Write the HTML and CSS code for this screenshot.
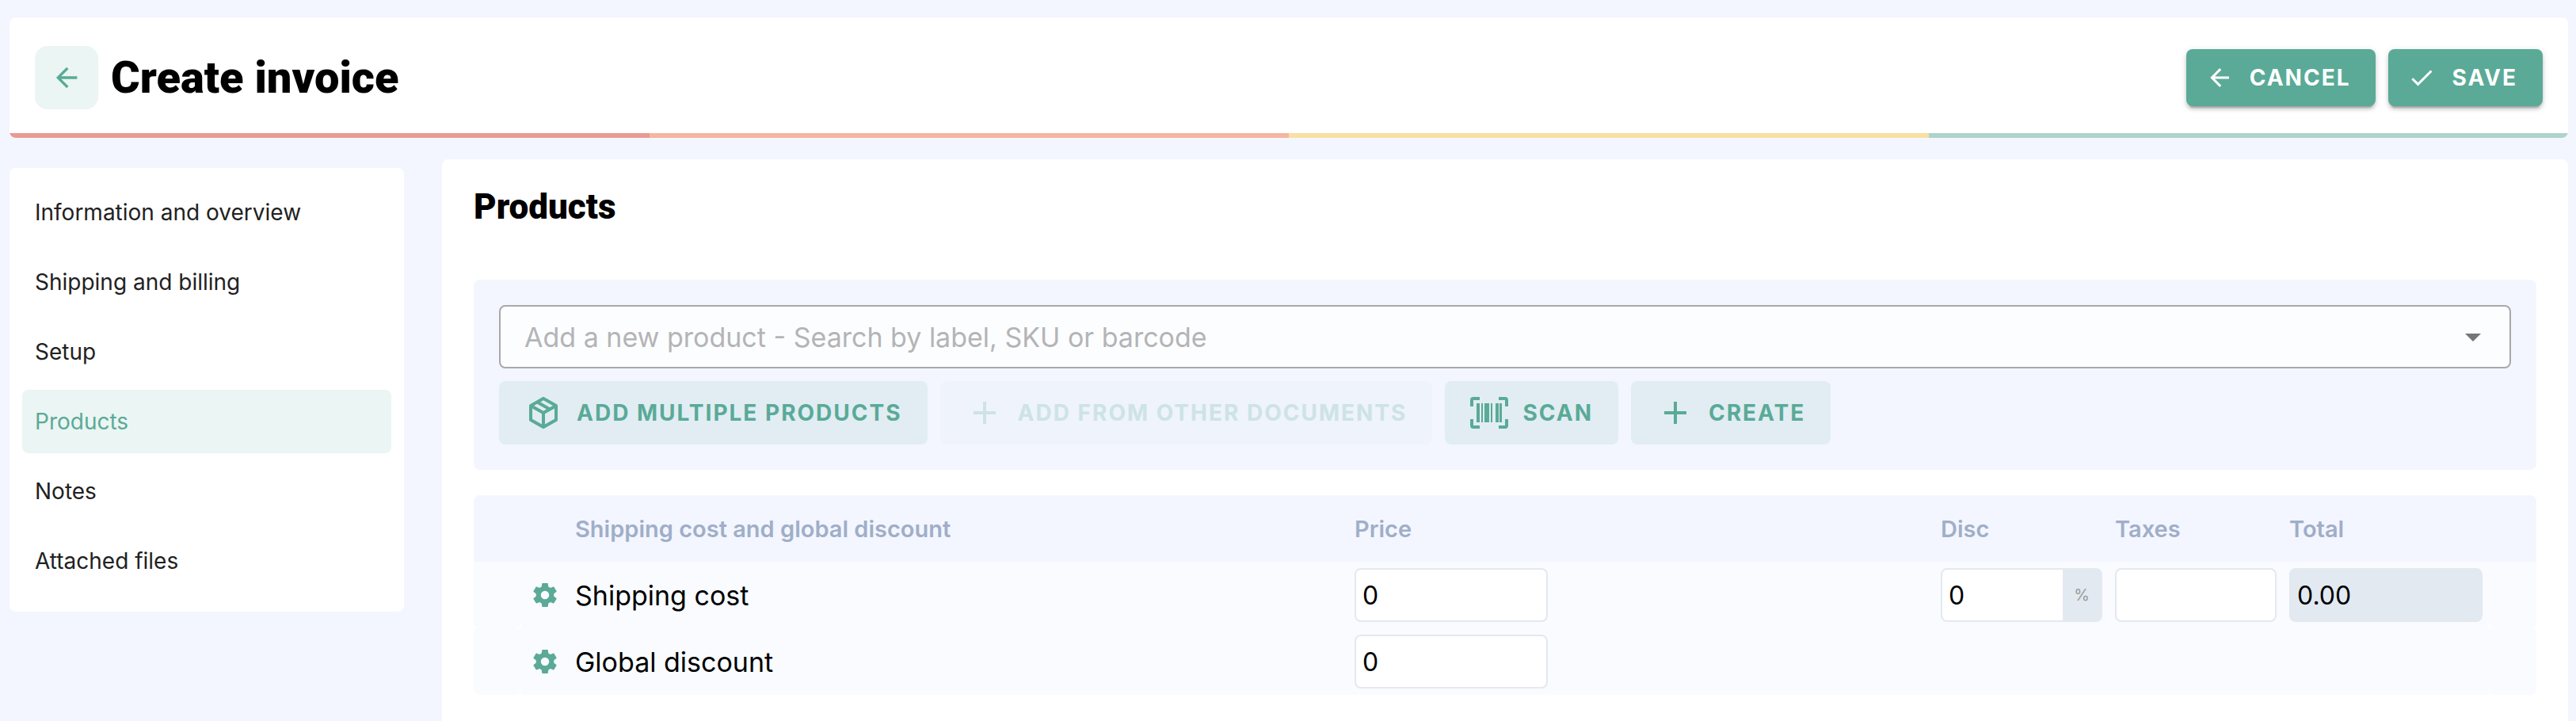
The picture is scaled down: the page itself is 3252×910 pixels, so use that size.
FILE: index.html
```html
<!DOCTYPE html>
<html lang="en">
<head>
    <meta charset="UTF-8">
    <meta name="viewport" content="width=device-width, initial-scale=1.0">
    <title>Create invoice</title>
    <link rel="stylesheet" href="styles.css">
</head>
<body>
    <header class="page-header">
        <div class="header-row">
            <button class="back-button" type="button" aria-label="Back">
                <svg width="40" height="40" viewBox="0 0 24 24"><path d="M20 11v2H8l5.500 5.500-1.420 1.420L4.160 12l7.920-7.920L13.500 5.500 8 11z"/></svg>
            </button>
            <h1>Create invoice</h1>
            <div class="header-actions">
                <button class="btn btn-primary" type="button">
                    <svg width="36" height="36" viewBox="0 0 24 24"><path d="M20 11v2H8l5.500 5.500-1.420 1.420L4.160 12l7.920-7.920L13.500 5.500 8 11z"/></svg>
                    CANCEL
                </button>
                <button class="btn btn-primary" type="button">
                    <svg width="36" height="36" viewBox="0 0 24 24"><path d="M21 7 9 19l-5.500-5.500 1.410-1.410L9 16.170 19.590 5.590z"/></svg>
                    SAVE
                </button>
            </div>
        </div>
        <div class="stripe">
            <span class="stripe-red"></span>
            <span class="stripe-orange"></span>
            <span class="stripe-yellow"></span>
            <span class="stripe-green"></span>
        </div>
    </header>

    <div class="content">
        <nav class="sidebar">
            <a href="#information">Information and overview</a>
            <a href="#shipping">Shipping and billing</a>
            <a href="#setup">Setup</a>
            <a href="#products" class="active">Products</a>
            <a href="#notes">Notes</a>
            <a href="#files">Attached files</a>
        </nav>

        <main class="card" id="products">
            <h2>Products</h2>

            <section class="add-panel">
                <div class="search">
                    <input type="text" aria-label="Add a new product" placeholder="Add a new product - Search by label, SKU or barcode">
                    <svg width="48" height="48" viewBox="0 0 24 24"><path d="M7 10l5 5 5-5z"/></svg>
                </div>
                <div class="add-actions">
                    <button class="btn btn-light" type="button">
                        <svg width="48" height="48" viewBox="0 0 24 24"><path d="M21 16.500c0 .38-.21.71-.53.88l-7.900 4.440c-.16.12-.36.18-.57.18s-.41-.06-.57-.18l-7.900-4.440A.99.990 0 0 1 3 16.500v-9c0-.38.21-.71.53-.88l7.900-4.440c.16-.12.36-.18.57-.18s.41.060.57.18l7.900 4.440c.32.17.53.5.53.88zM12 4.150l-1.890 1.070L16 8.610l1.960-1.110zM6.040 7.500 12 10.850l1.960-1.100-5.880-3.400zM5 15.910l6 3.380v-6.710L5 9.210zm14 0v-6.700l-6 3.370v6.710z"/></svg>
                        ADD MULTIPLE PRODUCTS
                    </button>
                    <button class="btn btn-light" type="button" disabled>
                        <svg width="48" height="48" viewBox="0 0 24 24"><path d="M19 13h-6v6h-2v-6H5v-2h6V5h2v6h6z"/></svg>
                        ADD FROM OTHER DOCUMENTS
                    </button>
                    <button class="btn btn-light" type="button">
                        <svg width="48" height="40" viewBox="0 0 48 40"><path d="M0 12V4a4 4 0 0 1 4-4h8v4H4v8zM36 0h8a4 4 0 0 1 4 4v8h-4V4h-8zM0 28v8a4 4 0 0 0 4 4h8v-4H4v-8zM44 28v8h-8v4h8a4 4 0 0 0 4-4v-8zM8 8h4v24H8zM14 8h2v24h-2zM18 8h6v24h-6zM26 8h2v24h-2zM32 8h4v24h-4zM37 8h3v24h-3z"/></svg>
                        SCAN
                    </button>
                    <button class="btn btn-light" type="button">
                        <svg width="48" height="48" viewBox="0 0 24 24"><path d="M19 13h-6v6h-2v-6H5v-2h6V5h2v6h6z"/></svg>
                        CREATE
                    </button>
                </div>
            </section>

            <table class="costs">
                <thead>
                    <tr>
                        <th class="col-edge"></th>
                        <th class="col-edge"></th>
                        <th>Shipping cost and global discount</th>
                        <th class="col-price">Price</th>
                        <th class="col-small">Disc</th>
                        <th class="col-small">Taxes</th>
                        <th class="col-total">Total</th>
                        <th class="col-edge"></th>
                    </tr>
                </thead>
                <tbody>
                    <tr>
                        <td></td>
                        <td>
                            <button class="gear" type="button" aria-label="Shipping cost settings">
                                <svg width="36" height="36" viewBox="0 0 24 24"><path d="M12 15.500A3.500 3.500 0 0 1 8.500 12 3.500 3.500 0 0 1 12 8.500a3.500 3.500 0 0 1 3.500 3.500 3.500 3.500 0 0 1-3.500 3.500m7.430-2.530c.04-.32.07-.64.07-.97s-.03-.66-.07-1l2.110-1.630c.19-.15.24-.42.12-.64l-2-3.460c-.12-.22-.39-.31-.61-.22l-2.490 1c-.52-.39-1.060-.73-1.690-.98l-.37-2.650A.506.506 0 0 0 14 2h-4c-.25 0-.46.18-.5.42l-.37 2.650c-.63.25-1.170.59-1.690.98l-2.490-1c-.22-.09-.49 0-.61.22l-2 3.460c-.13.22-.07.49.12.64L4.570 11c-.04.34-.07.67-.07 1s.03.65.07.97l-2.110 1.660c-.19.15-.25.42-.12.64l2 3.460c.12.22.39.3.61.22l2.490-1.010c.52.4 1.060.74 1.690.99l.37 2.650c.04.24.25.42.5.42h4c.25 0 .46-.18.5-.42l.37-2.650c.63-.26 1.170-.59 1.690-.99l2.490 1.010c.22.08.49 0 .61-.22l2-3.460c.12-.22.07-.49-.12-.64z"/></svg>
                            </button>
                        </td>
                        <td><label for="shipping-price">Shipping cost</label></td>
                        <td><input class="field" id="shipping-price" type="text" value="0"></td>
                        <td>
                            <div class="percent">
                                <input type="text" aria-label="Discount" value="0">
                                <span>%</span>
                            </div>
                        </td>
                        <td><input class="field" type="text" aria-label="Taxes"></td>
                        <td><input class="field" type="text" aria-label="Total" value="0.00" readonly></td>
                        <td></td>
                    </tr>
                    <tr>
                        <td></td>
                        <td>
                            <button class="gear" type="button" aria-label="Global discount settings">
                                <svg width="36" height="36" viewBox="0 0 24 24"><path d="M12 15.500A3.500 3.500 0 0 1 8.500 12 3.500 3.500 0 0 1 12 8.500a3.500 3.500 0 0 1 3.500 3.500 3.500 3.500 0 0 1-3.500 3.500m7.430-2.530c.04-.32.07-.64.07-.97s-.03-.66-.07-1l2.110-1.630c.19-.15.24-.42.12-.64l-2-3.460c-.12-.22-.39-.31-.61-.22l-2.490 1c-.52-.39-1.060-.73-1.690-.98l-.37-2.650A.506.506 0 0 0 14 2h-4c-.25 0-.46.18-.5.42l-.37 2.650c-.63.25-1.170.59-1.690.98l-2.490-1c-.22-.09-.49 0-.61.22l-2 3.460c-.13.22-.07.49.12.64L4.570 11c-.04.34-.07.67-.07 1s.03.65.07.97l-2.110 1.660c-.19.15-.25.42-.12.64l2 3.460c.12.22.39.3.61.22l2.490-1.010c.52.4 1.060.74 1.690.99l.37 2.650c.04.24.25.42.5.42h4c.25 0 .46-.18.5-.42l.37-2.650c.63-.26 1.170-.59 1.690-.99l2.490 1.010c.22.08.49 0 .61-.22l2-3.460c.12-.22.07-.49-.12-.64z"/></svg>
                            </button>
                        </td>
                        <td><label for="discount-price">Global discount</label></td>
                        <td><input class="field" id="discount-price" type="text" value="0"></td>
                        <td></td>
                        <td></td>
                        <td></td>
                        <td></td>
                    </tr>
                </tbody>
            </table>
        </main>
    </div>
</body>
</html>
```
FILE: styles.css
```css
* {
    box-sizing: border-box;
}

body {
    margin: 0;
    padding: 22px 10px 0 12px;
    min-height: 100vh;
    display: flex;
    flex-direction: column;
    background-color: #f3f6ff;
    color: #000;
    font-family: Inter, 'Open Sans', sans-serif;
    font-size: 34px;
}

button, input {
    font-family: inherit;
}

svg {
    display: block;
    fill: currentColor;
    flex-shrink: 0;
}

h1, h2 {
    margin: 0;
    font-family: Roboto, sans-serif;
    font-weight: 900;
}

/* header */
.page-header {
    background-color: #fff;
    border-radius: 8px;
    overflow: hidden;
}

.header-row {
    display: flex;
    align-items: center;
    height: 146px;
    padding: 6px 32px 0;
}

.back-button {
    display: flex;
    align-items: center;
    justify-content: center;
    width: 80px;
    height: 80px;
    padding: 0;
    border: none;
    border-radius: 16px;
    background-color: #ebf5f3;
    color: #5aaa97;
    cursor: pointer;
}

h1 {
    margin-left: 16px;
    font-size: 56px;
    line-height: 64px;
}

.header-actions {
    display: flex;
    gap: 16px;
    margin-left: auto;
}

.stripe {
    display: flex;
    height: 6px;
}

.stripe span {
    flex: 1;
}

.stripe-red {
    background-color: #e99a92;
}

.stripe-orange {
    background-color: #f5b5a0;
}

.stripe-yellow {
    background-color: #f9dfa4;
}

.stripe-green {
    background-color: #acd4cb;
}

/* buttons */
.btn {
    display: flex;
    align-items: center;
    border: none;
    border-radius: 8px;
    font-size: 28px;
    font-weight: 700;
    letter-spacing: 2px;
    white-space: nowrap;
    cursor: pointer;
}

.btn-primary {
    gap: 20px;
    height: 72px;
    padding: 0 32px 0 24px;
    background-color: #5aaa97;
    color: #fff;
    box-shadow: 0 6px 2px -4px rgba(0, 0, 0, 0.2), 0 4px 4px rgba(0, 0, 0, 0.14), 0 2px 10px rgba(0, 0, 0, 0.12);
}

.btn-light {
    gap: 18px;
    height: 80px;
    padding: 0 32px;
    background-color: #e1edf3;
    color: #5aaa97;
}

.btn-light:disabled {
    background-color: #eef3fc;
    color: #cde3e5;
    cursor: default;
}

/* layout */
.content {
    display: flex;
    flex: 1;
    align-items: flex-start;
    gap: 48px;
    margin-top: 27px;
}

.sidebar {
    width: 498px;
    flex-shrink: 0;
    margin-top: 11px;
    padding: 16px;
    background-color: #fff;
    border-radius: 8px;
}

.sidebar a {
    display: block;
    margin-bottom: 8px;
    padding: 0 16px;
    border-radius: 8px;
    color: #212121;
    font-size: 28px;
    line-height: 80px;
    text-decoration: none;
}

.sidebar a.active {
    background-color: #ebf5f3;
    color: #5aaa97;
}

.card {
    flex: 1;
    align-self: stretch;
    padding: 32px 40px;
    background-color: #fff;
    border-radius: 8px 8px 0 0;
}

h2 {
    margin-bottom: 64px;
    font-size: 44px;
    line-height: 56px;
}

/* product search */
.add-panel {
    padding: 32px;
    background-color: #f3f6ff;
    border-radius: 8px;
}

.search {
    display: flex;
    align-items: center;
    height: 80px;
    padding: 0 22px 0 30px;
    border: 2px solid #a9a9ac;
    border-radius: 8px;
    background-color: #fcfdff;
    color: #757679;
}

.search input {
    flex: 1;
    padding: 0;
    border: none;
    outline: none;
    background: none;
    font-size: 34px;
}

.search input::placeholder {
    color: #b4b4b6;
}

.add-actions {
    display: flex;
    gap: 16px;
    margin-top: 16px;
}

/* shipping cost and discount */
.costs {
    width: 100%;
    margin-top: 32px;
    table-layout: fixed;
    border-spacing: 0;
}

.costs th, .costs td {
    height: 84px;
    padding: 0 8px;
    text-align: left;
}

.costs th {
    background-color: #f3f6ff;
    color: #a0aec8;
    font-size: 29px;
    font-weight: 600;
}

.costs th:first-child {
    border-top-left-radius: 8px;
}

.costs th:last-child {
    border-top-right-radius: 8px;
}

.costs td {
    background-color: #f9fbff;
}

.costs td:first-child, .costs td:last-child {
    border-radius: 0 0 8px 8px;
}

.col-edge {
    width: 60px;
}

.col-price {
    width: 740px;
}

.col-small {
    width: 220px;
}

.col-total {
    width: 260px;
}

.gear {
    display: block;
    margin: 0 auto;
    padding: 0;
    border: none;
    background: none;
    color: #5aaa97;
    cursor: pointer;
}

.field {
    display: block;
    width: 100%;
    max-width: 244px;
    height: 68px;
    padding: 0 8px;
    border: 2px solid #e2e9f0;
    border-radius: 8px;
    background-color: #fff;
    font-size: 32px;
}

.field:read-only {
    background-color: #e2e9f0;
}

.percent {
    display: flex;
    height: 68px;
    border: 2px solid #e2e9f0;
    border-radius: 8px;
    overflow: hidden;
    background-color: #e2e9f0;
}

.percent input {
    flex: 1;
    min-width: 0;
    padding: 0 8px;
    border: none;
    font-size: 32px;
}

.percent span {
    width: 48px;
    color: #9a9a9a;
    font-size: 20px;
    line-height: 64px;
    text-align: center;
}
```
